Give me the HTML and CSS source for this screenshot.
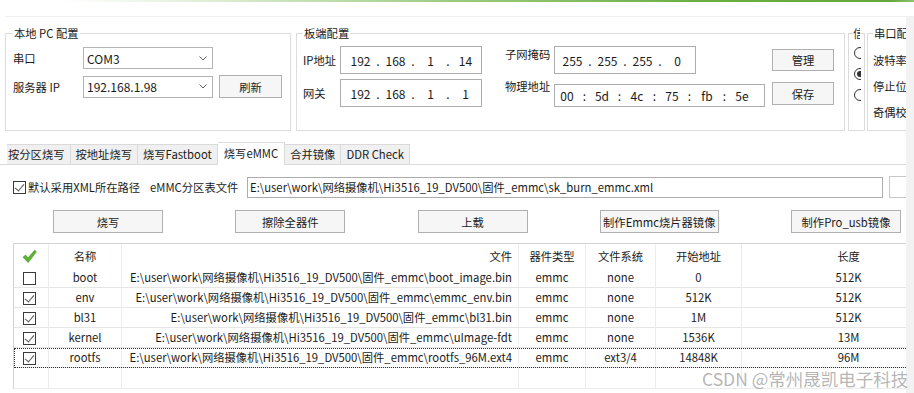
FILE: index.html
```html
<!DOCTYPE html>
<html lang="zh-CN">
<head>
    <meta charset="UTF-8" />
    <title>烧写eMMC</title>
    <link rel="stylesheet" href="styles.css">
</head>
<body>

<div class="window">
    <div class="titlebar"></div>

    <div class="main">
        <div class="content">

            <!-- 上方配置区 -->
            <div class="config">
                <fieldset class="group group-pc">
                    <legend>本地 PC 配置</legend>
                    <div class="pc-grid">
                        <span class="lbl">串口</span>
                        <div class="combo">
                            <span>COM3</span>
                            <svg class="chev" width="8" height="5" viewBox="0 0 8 5"><polyline points="0.5,0.5 4,4 7.5,0.5" fill="none" stroke="#606060" stroke-width="1"/></svg>
                        </div>
                        <span></span>
                        <span class="lbl">服务器 IP</span>
                        <div class="combo">
                            <span>192.168.1.98</span>
                            <svg class="chev" width="8" height="5" viewBox="0 0 8 5"><polyline points="0.5,0.5 4,4 7.5,0.5" fill="none" stroke="#606060" stroke-width="1"/></svg>
                        </div>
                        <button class="btn">刷新</button>
                    </div>
                </fieldset>

                <fieldset class="group group-board">
                    <legend>板端配置</legend>
                    <div class="board">
                        <div class="col-ip">
                            <div class="ip-row">
                                <span class="lbl">IP地址</span>
                                <div class="ipbox">
                                    <span class="seg">192</span><span class="dot">.</span><span class="seg">168</span><span class="dot">.</span><span class="seg">1</span><span class="dot">.</span><span class="seg">14</span>
                                </div>
                            </div>
                            <div class="ip-row">
                                <span class="lbl">网关</span>
                                <div class="ipbox">
                                    <span class="seg">192</span><span class="dot">.</span><span class="seg">168</span><span class="dot">.</span><span class="seg">1</span><span class="dot">.</span><span class="seg">1</span>
                                </div>
                            </div>
                        </div>
                        <div class="col-mask">
                            <div class="mask-row">
                                <span class="lbl">子网掩码</span>
                                <div class="ipbox mask">
                                    <span class="seg">255</span><span class="dot">.</span><span class="seg">255</span><span class="dot">.</span><span class="seg">255</span><span class="dot">.</span><span class="seg">0</span>
                                </div>
                            </div>
                            <div class="mac-row">
                                <span class="lbl">物理地址</span>
                                <div class="macbox">
                                    <span class="mseg">00</span><span class="colon">:</span><span class="mseg">5d</span><span class="colon">:</span><span class="mseg">4c</span><span class="colon">:</span><span class="mseg">75</span><span class="colon">:</span><span class="mseg">fb</span><span class="colon">:</span><span class="mseg">5e</span>
                                </div>
                            </div>
                        </div>
                        <div class="col-btn">
                            <button class="btn btn-manage">管理</button>
                            <button class="btn btn-save">保存</button>
                        </div>
                    </div>
                </fieldset>

                <fieldset class="group group-sig">
                    <legend>信号</legend>
                    <div class="radios">
                        <span class="radio"></span>
                        <span class="radio on"></span>
                        <span class="radio"></span>
                    </div>
                </fieldset>

                <fieldset class="group group-com">
                    <legend>串口配置</legend>
                    <div class="com-list">
                        <span class="lbl">波特率</span>
                        <span class="lbl">停止位</span>
                        <span class="lbl">奇偶校验</span>
                    </div>
                </fieldset>
            </div>

            <!-- 标签页 -->
            <div class="tabs">
                <div class="tab first">按分区烧写</div>
                <div class="tab">按地址烧写</div>
                <div class="tab">烧写Fastboot</div>
                <div class="tab active">烧写eMMC</div>
                <div class="tab">合并镜像</div>
                <div class="tab">DDR Check</div>
            </div>

            <div class="panel">
                <div class="filerow">
                    <span class="cb on"></span>
                    <span class="xml-label">默认采用XML所在路径</span>
                    <span class="tbl-label">eMMC分区表文件</span>
                    <div class="path">E:\user\work\网络摄像机\Hi3516_19_DV500\固件_emmc\sk_burn_emmc.xml</div>
                    <div class="path-extra"></div>
                </div>

                <div class="actions">
                    <button class="btn act">烧写</button>
                    <button class="btn act">擦除全器件</button>
                    <button class="btn act">上载</button>
                    <button class="btn act wide">制作Emmc烧片器镜像</button>
                    <button class="btn act">制作Pro_usb镜像</button>
                </div>

                <table class="parts">
                    <colgroup>
                        <col style="width:35px">
                        <col style="width:73px">
                        <col style="width:397px">
                        <col style="width:67px">
                        <col style="width:70px">
                        <col style="width:86px">
                        <col style="width:214px">
                    </colgroup>
                    <thead>
                        <tr>
                            <th class="chk">
                                <svg width="15" height="15" viewBox="0 0 15 15"><path d="M1 8.2 L3.6 6 L6 9 L12.6 1.2 L14.4 2.8 L6.2 13.6 Z" fill="#5cb531" stroke="#3f9120" stroke-width="0.6" stroke-linejoin="round"/></svg>
                            </th>
                            <th>名称</th>
                            <th class="file">文件</th>
                            <th>器件类型</th>
                            <th>文件系统</th>
                            <th>开始地址</th>
                            <th>长度</th>
                        </tr>
                    </thead>
                    <tbody>
                        <tr>
                            <td class="chk"><span class="cb"></span></td>
                            <td>boot</td>
                            <td class="file">E:\user\work\网络摄像机\Hi3516_19_DV500\固件_emmc\boot_image.bin</td>
                            <td>emmc</td><td>none</td><td>0</td><td>512K</td>
                        </tr>
                        <tr>
                            <td class="chk"><span class="cb on"></span></td>
                            <td>env</td>
                            <td class="file">E:\user\work\网络摄像机\Hi3516_19_DV500\固件_emmc\emmc_env.bin</td>
                            <td>emmc</td><td>none</td><td>512K</td><td>512K</td>
                        </tr>
                        <tr>
                            <td class="chk"><span class="cb on"></span></td>
                            <td>bl31</td>
                            <td class="file">E:\user\work\网络摄像机\Hi3516_19_DV500\固件_emmc\bl31.bin</td>
                            <td>emmc</td><td>none</td><td>1M</td><td>512K</td>
                        </tr>
                        <tr>
                            <td class="chk"><span class="cb on"></span></td>
                            <td>kernel</td>
                            <td class="file">E:\user\work\网络摄像机\Hi3516_19_DV500\固件_emmc\uImage-fdt</td>
                            <td>emmc</td><td>none</td><td>1536K</td><td>13M</td>
                        </tr>
                        <tr class="focus">
                            <td class="chk"><span class="cb on"></span></td>
                            <td>rootfs</td>
                            <td class="file">E:\user\work\网络摄像机\Hi3516_19_DV500\固件_emmc\rootfs_96M.ext4</td>
                            <td>emmc</td><td>ext3/4</td><td>14848K</td><td>96M</td>
                        </tr>
                        <tr class="filler">
                            <td></td><td></td><td></td><td></td><td></td><td></td><td></td>
                        </tr>
                    </tbody>
                </table>
            </div>
        </div>
        <div class="vscroll"></div>
    </div>

    <div class="watermark">CSDN @常州晟凯电子科技</div>
</div>

</body>
</html>
```

FILE: styles.css
```css
body {
    margin: 0;
    background: #fff;
    font-family: "Noto Sans CJK SC", "Noto Sans", sans-serif;
    font-size: 11.3px;
    color: #1b1b1b;
}
.window {
    position: relative;
    width: 914px;
    height: 393px;
    overflow: hidden;
}
.titlebar {
    height: 17px;
    background:
        linear-gradient(90deg, rgba(255,255,255,0) 60px, #dcecd2 220px, #9ccb80 450px, #6aae44 700px, #62a83c 890px, #8cc36e 914px) top left / 100% 2px no-repeat,
        linear-gradient(#f0f0f0, #f0f0f0) 5px 16px / 909px 1px no-repeat;
}
.main {
    display: flex;
    height: 376px;
}
.content {
    width: 906px;
    flex: none;
    overflow: hidden;
}
.vscroll {
    flex: 1;
    background: #f2f2f2;
}

/* 配置区 */
.config {
    display: flex;
    height: 106px;
    padding: 8px 0 0 5px;
}
.group {
    margin: 0;
    border: 1px solid #dcdcdc;
    min-width: 0;
    box-sizing: border-box;
    flex: none;
}
.group legend {
    padding: 0 1px;
    line-height: 16px;
    white-space: nowrap;
}
.lbl {
    line-height: 16px;
    white-space: nowrap;
}
.group-pc {
    width: 286px;
    padding: 6px 7px 0 7px;
}
.pc-grid {
    display: grid;
    grid-template-columns: 64px 130px 63px;
    grid-template-rows: 22px 23px;
    column-gap: 6px;
    row-gap: 6px;
    align-items: center;
}
.combo {
    display: flex;
    align-items: center;
    justify-content: space-between;
    height: 22px;
    box-sizing: border-box;
    border: 1px solid #b4b4b4;
    background: #fff;
    padding: 0 5px 0 3px;
    font-size: 12px;
}
.btn {
    font-family: inherit;
    font-size: 11.3px;
    color: #1b1b1b;
    background: #f6f6f6;
    border: 1px solid #b0b0b0;
    padding: 0;
    box-sizing: border-box;
    height: 23px;
    white-space: nowrap;
}

.group-board {
    width: 549px;
    margin-left: 5px;
    padding: 5px 0 0 6px;
}
.board {
    display: flex;
}
.col-ip {
    display: flex;
    flex-direction: column;
    gap: 5px;
    width: 179px;
}
.ip-row {
    display: flex;
    align-items: center;
}
.ip-row .lbl {
    width: 37px;
}
.ipbox {
    display: flex;
    align-items: center;
    width: 142px;
    height: 28px;
    box-sizing: border-box;
    border: 1px solid #acacac;
    padding-left: 6px;
    font-size: 12px;
}
.ipbox.mask {
    padding-left: 4px;
}
.seg {
    width: 27px;
    text-align: center;
}
.dot {
    width: 8px;
    text-align: center;
}
.col-mask {
    width: 260px;
    margin-left: 23px;
}
.mask-row {
    display: flex;
    align-items: flex-start;
    height: 28px;
}
.mask-row .lbl,
.mac-row .lbl {
    width: 49px;
}
.mac-row {
    display: flex;
    align-items: flex-start;
    margin-top: 4px;
}
.macbox {
    display: flex;
    align-items: center;
    width: 211px;
    height: 23px;
    margin-top: 6px;
    box-sizing: border-box;
    border: 1px solid #acacac;
    font-size: 12px;
}
.mseg {
    width: 24px;
    text-align: center;
}
.colon {
    width: 11px;
    text-align: center;
}
.col-btn {
    display: flex;
    flex-direction: column;
    margin-left: 7px;
    padding-top: 3px;
}
.col-btn .btn {
    width: 62px;
}
.btn-manage {
    height: 22px;
}
.btn-save {
    margin-top: 11px;
}

.group-sig {
    width: 17px;
    margin-left: 3px;
    padding: 0 0 0 4px;
}
.group-sig legend {
    width: 7px;
    overflow: hidden;
    padding: 0;
}
.radios {
    display: flex;
    flex-direction: column;
    gap: 9px;
    width: 7px;
    overflow: hidden;
    margin-top: 6px;
    margin-left: 1px;
}
.radio {
    display: block;
    width: 12px;
    height: 12px;
    box-sizing: border-box;
    border: 1px solid #333;
    border-radius: 50%;
    background: #fff;
    position: relative;
}
.radio.on::after {
    content: "";
    position: absolute;
    left: 2px;
    top: 2px;
    width: 6px;
    height: 6px;
    border-radius: 50%;
    background: #333;
}
.group-com {
    width: 120px;
    margin-left: 2px;
    padding: 11px 0 0 5px;
}
.com-list {
    display: flex;
    flex-direction: column;
    gap: 10px;
}

/* 标签页 */
.tabs {
    display: flex;
    align-items: flex-end;
    height: 22px;
    margin: 11px 0 0 7px;
}
.tab {
    height: 20px;
    line-height: 19px;
    padding: 0 5px;
    background: #f0f0f0;
    border: 1px solid #dadada;
    border-bottom: 0;
    border-left: 0;
    box-sizing: border-box;
    white-space: nowrap;
}
.tab.first {
    padding-left: 1px;
}
.tab.active {
    height: 23px;
    line-height: 20px;
    background: #fff;
    margin-bottom: -1px;
    padding: 0 6px;
    position: relative;
}

.panel {
    border-top: 1px solid #dadada;
    padding-left: 13px;
    height: 228px;
}
.filerow {
    display: flex;
    align-items: center;
    height: 20px;
    margin-top: 12px;
}
.cb {
    display: inline-block;
    flex: none;
    width: 13px;
    height: 13px;
    box-sizing: border-box;
    border: 1px solid #3a3a3a;
    background: #fff;
    vertical-align: middle;
    position: relative;
}
.cb.on::after {
    content: "";
    position: absolute;
    left: 3px;
    top: 0px;
    width: 4px;
    height: 8px;
    border: solid #555;
    border-width: 0 1px 1px 0;
    transform: rotate(40deg);
}
.xml-label {
    width: 122px;
    margin-left: 2px;
    white-space: nowrap;
    flex: none;
}
.tbl-label {
    width: 97px;
    white-space: nowrap;
    flex: none;
}
.path {
    width: 636px;
    height: 21px;
    line-height: 19px;
    box-sizing: border-box;
    border: 1px solid #acacac;
    padding-left: 2px;
    white-space: nowrap;
    overflow: hidden;
    flex: none;
}
.path-extra {
    width: 40px;
    height: 22px;
    margin-left: 6px;
    border: 1px solid #c8c8c8;
    box-sizing: border-box;
    flex: none;
}
.actions {
    display: flex;
    justify-content: space-between;
    width: 848px;
    margin: 13px 0 0 40px;
}
.act {
    width: 110px;
}
.act.wide {
    width: 119px;
}

/* 分区表 */
.parts {
    table-layout: fixed;
    width: 942px;
    margin-top: 10px;
    border-collapse: separate;
    border-spacing: 0;
    border-top: 1px solid #d4d4d4;
    border-left: 1px solid #d4d4d4;
}
.parts th {
    font-weight: normal;
    height: 24px;
    line-height: 24px;
    padding: 0;
    text-align: center;
    border-right: 1px solid #ececec;
    white-space: nowrap;
}
.parts td {
    height: 19px;
    line-height: 19px;
    padding: 0;
    text-align: center;
    border-right: 1px solid #ececec;
    border-bottom: 1px solid #e6e6e6;
    white-space: nowrap;
    overflow: hidden;
}
.parts .file {
    text-align: right;
    padding-right: 6px;
}
.parts th.chk svg {
    display: block;
    margin: 0 0 0 8px;
}
.parts td.chk .cb {
    margin-left: -3px;
}
.parts tr.focus {
    outline: 1px dotted #333;
    outline-offset: -1px;
}
.parts tr.filler td {
    height: 20px;
    border-bottom: 1px solid #ececec;
}

.watermark {
    position: absolute;
    left: 702px;
    top: 366px;
    font-size: 17.5px;
    color: rgba(150, 150, 150, 0.7);
    white-space: nowrap;
}
```
